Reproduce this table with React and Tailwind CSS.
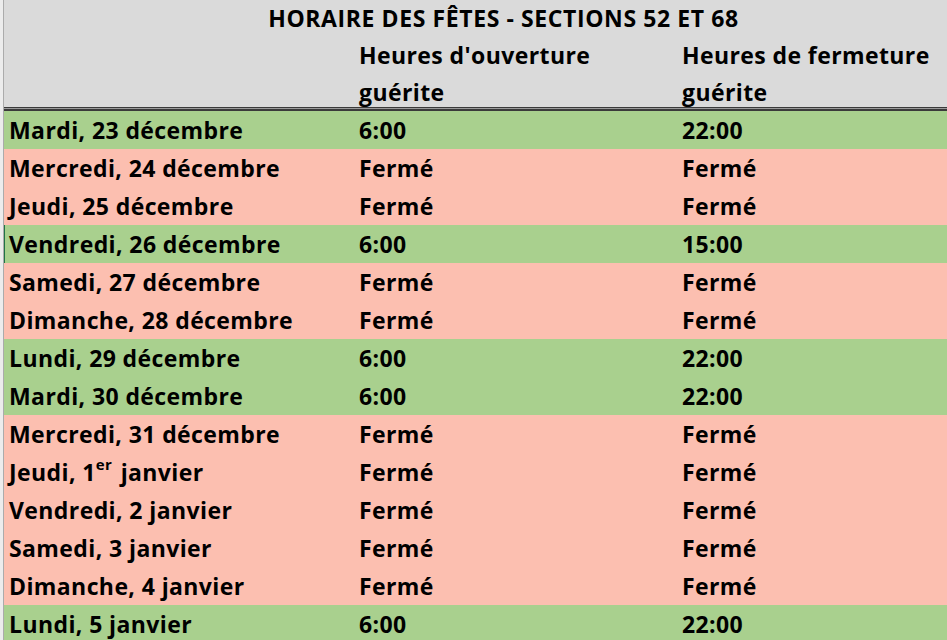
import React from 'react';

const rows = [
  { day: 'Mardi, 23 décembre', open: '6:00', close: '22:00', ok: true },
  { day: 'Mercredi, 24 décembre', open: 'Fermé', close: 'Fermé' },
  { day: 'Jeudi, 25 décembre', open: 'Fermé', close: 'Fermé' },
  { day: 'Vendredi, 26 décembre', open: '6:00', close: '15:00', ok: true, active: true },
  { day: 'Samedi, 27 décembre', open: 'Fermé', close: 'Fermé' },
  { day: 'Dimanche, 28 décembre', open: 'Fermé', close: 'Fermé' },
  { day: 'Lundi, 29 décembre', open: '6:00', close: '22:00', ok: true },
  { day: 'Mardi, 30 décembre', open: '6:00', close: '22:00', ok: true },
  { day: 'Mercredi, 31 décembre', open: 'Fermé', close: 'Fermé' },
  { day: 'Jeudi, 1', sup: 'er', after: ' janvier', open: 'Fermé', close: 'Fermé' },
  { day: 'Vendredi, 2 janvier', open: 'Fermé', close: 'Fermé' },
  { day: 'Samedi, 3 janvier', open: 'Fermé', close: 'Fermé' },
  { day: 'Dimanche, 4 janvier', open: 'Fermé', close: 'Fermé' },
  { day: 'Lundi, 5 janvier', open: '6:00', close: '22:00', ok: true },
];

export default function App() {
  return (
    <div
      className="w-[947px] h-[640px] overflow-hidden flex bg-[#e8e8e8] text-black font-bold text-[23px] tracking-[0.4px]"
      style={{ fontFamily: '"Open Sans", "Liberation Sans", sans-serif' }}
    >
      {/* row header strip */}
      <div className="w-[3px] shrink-0 bg-[#ececec]" />
      <div className="w-[1px] shrink-0 bg-[#ababab]" />

      <div className="flex-1 flex flex-col">
        {/* Header */}
        <div className="bg-[#dadada] h-[107px] shrink-0 flex flex-col">
          <div className="h-[36px] shrink-0 flex items-center justify-center pl-[56px] leading-[30px] tracking-[0.6px]">
            HORAIRE DES FÊTES - SECTIONS 52 ET 68
          </div>
          <div className="h-[71px] shrink-0 grid grid-cols-[350px_323px_1fr] leading-[37px]">
            <div />
            <div className="pl-[5px] pt-[1px]">
              Heures d'ouverture
              <br />
              guérite
            </div>
            <div className="pl-[5px] pt-[1px]">
              Heures de fermeture
              <br />
              guérite
            </div>
          </div>
        </div>
        <div className="h-[1px] shrink-0 bg-[#3a3a3a]" />
        <div className="h-[1px] shrink-0 bg-[#9a9a9a]" />
        <div className="h-[2px] shrink-0 bg-[#3a3a3a]" />

        {/* Rows */}
        {rows.map((r, i) => (
          <div
            key={i}
            className={`grid grid-cols-[350px_323px_1fr] h-[38px] shrink-0 items-center ${
              r.ok ? 'bg-[#a9d08e]' : 'bg-[#fcbfb0]'
            } ${r.active ? 'shadow-[inset_1px_0_0_#217346]' : ''}`}
          >
            <div className="pl-[5px] whitespace-nowrap">
              {r.day}
              <sup className={r.sup ? 'text-[15px] relative -top-[11px] mr-[2px]' : 'hidden'}>{r.sup}</sup>
              {r.after}
            </div>
            <div className="pl-[5px]">{r.open}</div>
            <div className="pl-[5px]">{r.close}</div>
          </div>
        ))}
      </div>
    </div>
  );
}
